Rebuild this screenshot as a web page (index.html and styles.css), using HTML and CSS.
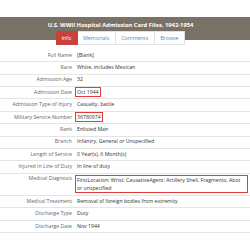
FILE: index.html
```html
<!DOCTYPE html>
<html>
<head>
<meta charset="utf-8">
<link rel="stylesheet" href="styles.css">
</head>
<body>
<div class="band">
  <div class="title">U.S. WWII Hospital Admission Card Files, 1942-1954</div>
  <div class="tabs">
    <span class="tab active">Info</span><span class="tab">Memorials</span><span class="tab">Comments</span><span class="tab">Browse</span>
  </div>
</div>
<div class="rows">
  <div class="row"><div class="lab">Full Name</div><div class="val">[Blank]</div></div>
  <div class="row"><div class="lab">Race</div><div class="val">White, includes Mexican</div></div>
  <div class="row"><div class="lab">Admission Age</div><div class="val">32</div></div>
  <div class="row"><div class="lab">Admission Date</div><div class="val"><span class="hl">Oct 1944</span></div></div>
  <div class="row"><div class="lab">Admission Type of Injury</div><div class="val">Casualty, battle</div></div>
  <div class="row"><div class="lab">Military Service Number</div><div class="val"><span class="hl">36780974</span></div></div>
  <div class="row"><div class="lab">Rank</div><div class="val">Enlisted Man</div></div>
  <div class="row"><div class="lab">Branch</div><div class="val">Infantry, General or Unspecified</div></div>
  <div class="row"><div class="lab">Length of Service</div><div class="val">0 Year(s), 6 Month(s)</div></div>
  <div class="row"><div class="lab">Injured in Line of Duty</div><div class="val">In line of duty</div></div>
  <div class="row"><div class="lab">Medical Diagnosis</div><div class="val"><div class="hl blk">FirstLocation: Wrist; CausativeAgent: Artillery Shell, Fragments, Abot or unspecified</div></div></div>
  <div class="row"><div class="lab">Medical Treatment</div><div class="val">Removal of foreign bodies from extremity</div></div>
  <div class="row"><div class="lab">Discharge Type</div><div class="val">Duty</div></div>
  <div class="row"><div class="lab">Discharge Date</div><div class="val">Nov 1944</div></div>
</div>
</body>
</html>
```

FILE: styles.css
```css
html, body {
  margin: 0;
  padding: 0;
  background: #fff;
  font-family: "Open Sans", "Liberation Sans", sans-serif;
}
.band {
  margin-top: 17px;
  height: 23px;
  background: #7a7266;
  display: flex;
  flex-direction: column;
  align-items: center;
}
.title {
  color: #fff;
  font-weight: bold;
  font-size: 5.8px;
  line-height: 8px;
  margin-top: 4px;
  margin-left: -9px;
}
.tabs {
  display: flex;
  margin-top: 2px;
  margin-left: -9px;
}
.tab {
  display: block;
  height: 14px;
  box-sizing: border-box;
  padding: 0 5.5px;
  line-height: 13px;
  font-size: 5.3px;
  color: #4a8ccc;
  background: #fff;
  border: 0.5px solid #e2e2e2;
  border-left: none;
}
.tab.active {
  background: #c9413b;
  color: #fff;
  border-color: #c9413b;
  border-radius: 1px 1px 0 0;
}
.rows {
  margin-top: 10px;
}
.row {
  display: grid;
  grid-template-columns: 72px 1fr;
  column-gap: 5px;
  font-size: 5.2px;
  line-height: 7.86px;
  padding: 1.75px 0;
  border-bottom: 1px solid #e4e4e4;
}
.lab {
  text-align: right;
  color: #666;
}
.val {
  color: #333;
}
.hl {
  border: 1px solid #e53a3a;
  padding: 0 1px;
  margin-left: -2px;
}
.blk {
  display: block;
  margin-right: 2px;
  line-height: 8px;
}
```
